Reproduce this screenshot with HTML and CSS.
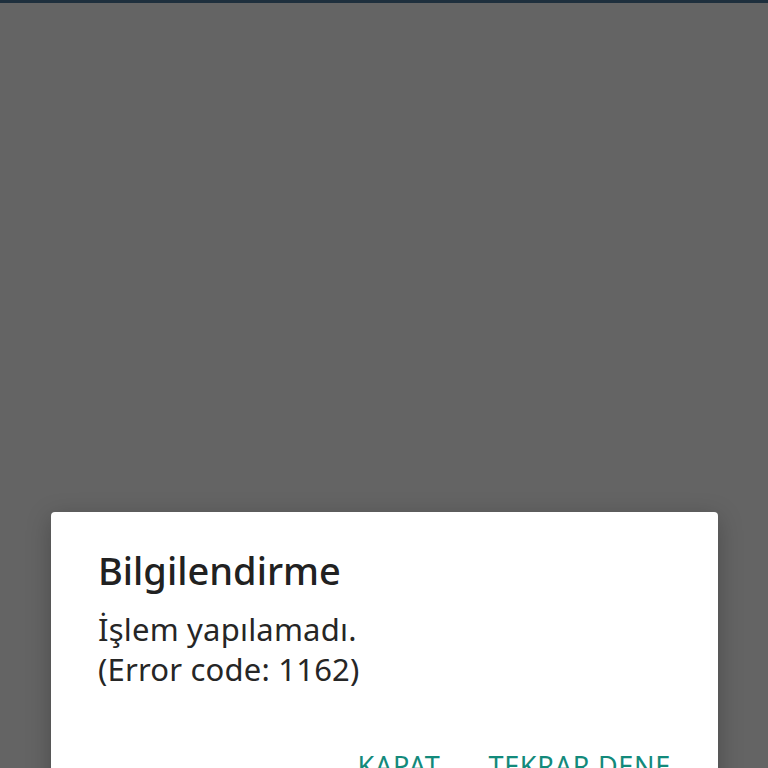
FILE: index.html
```html
<!DOCTYPE html>
<html lang="tr">
<head>
  <meta charset="UTF-8">
  <meta name="viewport" content="width=device-width, initial-scale=1.0">
  <title>Bilgilendirme</title>
  <link rel="stylesheet" href="styles.css">
</head>
<body>
  <div class="status-bar"></div>
  <div class="scrim">
    <div class="dialog">
      <h2 class="dialog-title">Bilgilendirme</h2>
      <p class="dialog-message">İşlem yapılamadı.<br>(Error code: 1162)</p>
      <div class="dialog-actions">
        <button class="dialog-btn">KAPAT</button>
        <button class="dialog-btn">TEKRAR DENE</button>
      </div>
    </div>
  </div>
</body>
</html>
```

FILE: styles.css
```css
/* Page */
body {
  margin: 0;
  height: 100vh;
  overflow: hidden;
  background: #646464;
  font-family: "Noto Sans", "Open Sans", sans-serif;
}

/* Thin dark strip at the very top */
.status-bar {
  height: 3px;
  background: #1e2f3d;
}

/* Dimmed area holding the dialog */
.scrim {
  padding: 509px 50px 0 51px;
}

.dialog {
  background: #fff;
  border-radius: 4px;
  padding: 36px 47px 40px;
  height: 300px;
  box-shadow: 0 6px 24px rgba(0, 0, 0, 0.25);
}

.dialog-title {
  margin: 0;
  font-size: 38px;
  font-weight: 500;
  line-height: 44px;
  color: #212121;
}

.dialog-message {
  margin: 17px 0 0;
  font-size: 31px;
  letter-spacing: 0.2px;
  line-height: 40px;
  color: #262626;
}

/* Action buttons */
.dialog-actions {
  display: flex;
  justify-content: flex-end;
  gap: 48px;
  margin-top: 58px;
}

button {
  background: transparent;
  border: none;
  padding: 0;
  cursor: pointer;
}

.dialog-btn {
  font-family: inherit;
  font-size: 27px;
  letter-spacing: 0.7px;
  color: #138a7b;
}
```
